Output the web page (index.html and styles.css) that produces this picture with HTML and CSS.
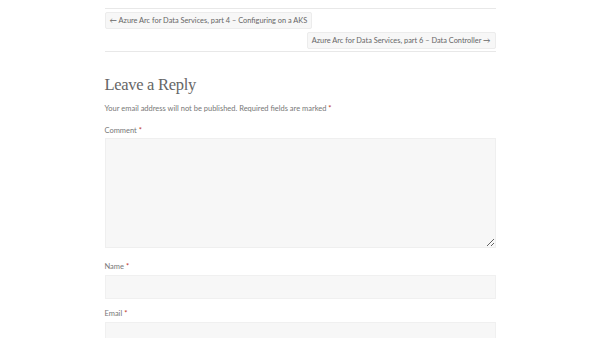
FILE: index.html
```html
<!DOCTYPE html>
<html>
<head>
<meta charset="utf-8">
<link rel="stylesheet" href="styles.css">
</head>
<body>
<div class="wrap">
  <nav class="post-nav">
    <div class="nav-prev"><a class="nav-btn" href="#">← Azure Arc for Data Services, part 4 – Configuring on a AKS</a></div>
    <div class="nav-next"><a class="nav-btn" href="#">Azure Arc for Data Services, part 6 – Data Controller →</a></div>
  </nav>
  <section class="respond">
    <h3 class="reply-title">Leave a Reply</h3>
    <p class="notes">Your email address will not be published. Required fields are marked <span class="req">*</span></p>
    <p class="field field-ta">
      <label class="lbl">Comment <span class="req">*</span></label>
      <textarea class="ta"></textarea>
    </p>
    <p class="field">
      <label class="lbl">Name <span class="req">*</span></label>
      <input class="inp" type="text">
    </p>
    <p class="field">
      <label class="lbl">Email <span class="req">*</span></label>
      <input class="inp" type="text">
    </p>
  </section>
</div>
</body>
</html>
```
FILE: styles.css
```css
html, body { margin: 0; padding: 0; background: #fff; }
body { font-family: Lato, "Open Sans", sans-serif; color: #777; }
.wrap { width: 391px; margin: 0 auto; padding-top: 8px; }
.post-nav {
  border-top: 1px solid #e8e8e8;
  border-bottom: 1px solid #e8e8e8;
  padding: 3px 0 3px;
  display: flex; flex-direction: column; gap: 3px;
  height: 36px;
}
.nav-prev { display: flex; justify-content: flex-start; }
.nav-next { display: flex; justify-content: flex-end; }
.nav-btn {
  display: inline-block;
  font-size: 7.4px;
  line-height: 15px;
  height: 17px;
  padding: 0 4px;
  background: #f7f7f7;
  border: 1px solid #ececec;
  border-radius: 2px;
  color: #666;
  text-decoration: none;
  box-sizing: border-box;
}
.respond { padding-top: 21px; }
.reply-title {
  font-family: "Liberation Serif", "DejaVu Serif", serif;
  font-weight: normal;
  font-size: 16.5px;
  line-height: 24px;
  color: #666;
  letter-spacing: -0.3px;
  margin: 0 0 6px;
}
.notes { font-size: 7.5px; line-height: 12px; margin: 0 0 10px; color: #777; }
.req { color: #c0392b; }
.field { margin: 0 0 9px; }
.field-ta { margin-bottom: 13px; }
.lbl { display: block; font-size: 7.5px; line-height: 12px; margin-bottom: 2px; color: #777; }
.field-ta .lbl { margin-bottom: 1px; }
.ta {
  display: block; width: 391px; height: 110px; box-sizing: border-box;
  background: #f7f7f7; border: 1px solid #efefef; margin: 0; padding: 0; resize: vertical;
}
.inp {
  display: block; width: 391px; height: 24px; box-sizing: border-box;
  background: #f7f7f7; border: 1px solid #f0f0f0; margin: 0; padding: 0;
}
```
